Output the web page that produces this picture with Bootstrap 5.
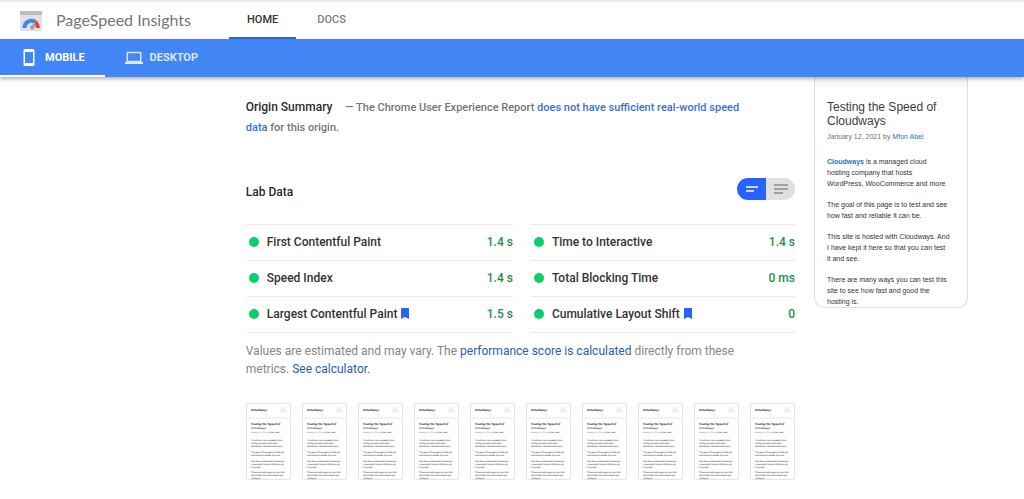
<!DOCTYPE html>
<html lang="en">
<head>
<meta charset="utf-8">
<meta name="viewport" content="width=device-width, initial-scale=1">
<title>PageSpeed Insights</title>
<link href="https://cdn.jsdelivr.net/npm/bootstrap@5.3.0/dist/css/bootstrap.min.css" rel="stylesheet">
<style>
  body { font-family: Roboto, "Liberation Sans", sans-serif; font-size: 12px; color: #333; }
  a { text-decoration: none; color: #3b6fe0; }
  .site-header { border-top: 2px solid #ebebeb; height: 39px; padding-left: 19px; }
  .brand-name { font-family: Lato, sans-serif; font-size: 16px; line-height: 20px; color: #757575; width: 173px; margin-left: 13px; padding-bottom: 2px; }
  .site-nav { gap: 3px; }
  .site-tab { font-size: 11px; font-weight: 500; color: #808080; padding: 2px 18px 0; border-bottom: 2px solid transparent; }
  .site-tab.active { color: #333; border-color: #3367d6; }
  .device-bar { background: #4285f4; height: 38px; box-shadow: 0 2px 4px rgba(0,0,0,.3); position: relative; z-index: 2; }
  .device-tab { border: 0; border-bottom: 2px solid transparent; background: none; color: #d9e6fd; font-size: 11px; font-weight: 700; padding: 2px 20px 0; gap: 7px; }
  .device-tab.active { color: #fff; border-color: #fff; }
  .report { padding-left: 24%; padding-right: 56px; gap: 19px; }
  .results { padding-top: 20px; min-width: 0; }
  .section-title { font-size: 12px; font-weight: 500; line-height: 20px; color: #2b2b2b; }
  .origin { font-size: 11px; font-weight: 500; line-height: 20px; color: #757575; margin-bottom: 38px; padding-right: 40px; }
  .origin .section-title { margin-right: 10px; display: inline; }
  .lab-title { padding-top: 6px; }
  .view-switch { border-radius: 11px; overflow: hidden; }
  .view-switch label { width: 29px; height: 22px; background: #e0e0e0; }
  .view-switch input:checked + label { background: #2962ff; }
  .metrics { display: grid; grid-template-columns: 267fr 264fr; column-gap: 18px; margin-top: 22px; }
  .metric-list { border-top: 1px solid #ebebeb; margin: 0; }
  .metric { height: 36px; border-bottom: 1px solid #ebebeb; font-size: 12px; font-weight: 500; padding: 0 0 2px 3px; }
  .metric dt { font-weight: 500; color: #333; }
  .metric dd { color: #1a8f4a; margin: 0 0 0 auto; }
  .pass-dot { width: 10px; height: 10px; border-radius: 50%; background: #0cce6b; margin-right: 8px; }
  .disclaimer { font-size: 12px; line-height: 18px; color: #858585; margin: 9px 40px 25px 0; }
  .disclaimer a { color: #2a5db0; }
  .frame { width: 45px; height: 78px; }
  .final-shot { flex: 0 0 154px; height: 231px; border: 1px solid #dedede; border-top: 0; border-radius: 0 0 10px 10px; overflow: hidden; font-family: "Liberation Sans", sans-serif; font-size: 7px; line-height: 11px; color: #333; }
  .shot-header { height: 10px; background: #f7f7f7; }
  .shot-body { padding: 13px 8px 0 12px; }
  .shot-body h2 { font-size: 12px; line-height: 14px; font-weight: 400; margin: 0 0 3px; color: #3a3a3a; }
  .shot-body p { margin: 0 0 10px; white-space: nowrap; }
  .shot-body .byline { font-size: 7px; color: #6f6f6f; margin-bottom: 14px; }
  .shot-body a { color: #1e73be; }
</style>
</head>
<body class="bg-white">
<svg class="d-none" aria-hidden="true">
  <symbol id="bookmark" viewBox="0 0 8 11"><path fill="#2962ff" d="M0 1Q0 0 1 0H7Q8 0 8 1V11L4 9L0 11Z"/></symbol>
  <symbol id="frame" viewBox="0 0 45 78">
    <path fill="#fff" stroke="#e4e4e4" d="M.5.5h44v76H.5z"/>
    <path fill="#f3f3f3" d="M1 14h43v2H1z"/>
    <path fill="#f5f5f5" d="M34 4h6v6h-6z"/><path stroke="#aaa" stroke-width=".6" d="M36 7h2"/>
    <g font-family="Liberation Sans, sans-serif" font-size="2.2" fill="#111" text-rendering="geometricPrecision">
      <text x="5" y="8" font-size="3" font-weight="700">Cloudways</text>
      <text x="5" y="22" font-size="3" font-weight="700">Testing the Speed of</text>
      <text x="5" y="26" font-size="3">Cloudways</text>
      <text x="5" y="30" font-size="2" fill="#777">January 12, 2021 by <tspan fill="#1e73be" font-weight="700">Mfon Abel</tspan></text>
      <text x="5" y="38"><tspan fill="#1e8fc5" font-weight="700">Cloudways</tspan> is a managed cloud</text>
      <text x="5" y="41">hosting company that hosts</text>
      <text x="5" y="44">WordPress, WooCommerce and</text>
      <text x="5" y="50">The goal of this page is to test and</text>
      <text x="5" y="53">how fast and reliable it can be.</text>
      <text x="5" y="59">This site is hosted with Cloudways.</text>
      <text x="5" y="62">I have kept it here so that you can</text>
      <text x="5" y="65">it and see.</text>
      <text x="5" y="70">There are many ways you can test</text>
      <text x="5" y="73">site to see how fast and good the</text>
      <text x="5" y="76">hosting is.</text>
    </g>
  </symbol>
</svg>

<header class="site-header d-flex align-items-stretch">
  <svg class="align-self-center" width="24" height="20" viewBox="0 0 24 20" aria-hidden="true">
    <rect x="1" width="22" height="20" rx="1" fill="#e1e1e1"/><path fill="#bdbdbd" d="M1 1q0-1 1-1h20q1 0 1 1v3H1z"/>
    <path fill="none" stroke="#4285f4" stroke-width="4" d="M5.500 17A7 7 0 0 1 16 10.700"/>
    <path fill="#db4437" d="M17 9q3.700 3 3.800 8H17q0-3-2-5z"/>
    <path fill="#9e9e9e" d="M17.500 10.500L15 17.500q-1.500 2-3.200.8-1.500-1.500 0-3z"/>
  </svg>
  <span class="brand-name align-self-center">PageSpeed Insights</span>
  <nav class="site-nav d-flex" aria-label="Site">
    <a class="site-tab active d-flex align-items-center" href="#">HOME</a>
    <a class="site-tab d-flex align-items-center" href="#">DOCS</a>
  </nav>
</header>

<div class="device-bar d-flex">
  <button type="button" class="device-tab active d-flex align-items-center">
    <svg width="18" height="18" viewBox="0 0 18 18" aria-hidden="true"><path fill="#fff" fill-rule="evenodd" d="M5 0h8q1.500 0 1.500 1.500v14q0 1.500-1.500 1.500H5q-1.500 0-1.500-1.500v-14Q3.500 0 5 0zM5 3v11h8V3z"/></svg>MOBILE</button>
  <button type="button" class="device-tab d-flex align-items-center">
    <svg width="18" height="14" viewBox="0 0 18 14" aria-hidden="true"><path fill="none" stroke="#d9e6fd" stroke-width="1.500" d="M2.300 1.500h13.400v9H2.300z"/><path fill="#d9e6fd" d="M0 11h18v2H0z"/></svg>DESKTOP</button>
</div>

<main class="report d-flex align-items-start">
  <div class="results flex-grow-1">
    <div class="origin"><h2 class="section-title">Origin Summary</h2> — The Chrome User Experience Report <a href="#">does not have sufficient real-world speed data</a> for this origin.</div>

    <div class="d-flex align-items-center justify-content-between">
      <h2 class="section-title lab-title m-0">Lab Data</h2>
      <div class="view-switch d-flex" role="group" aria-label="Metric detail">
        <input class="visually-hidden" type="radio" name="detail" id="compact" checked>
        <label for="compact" class="d-flex align-items-center justify-content-center" aria-label="Compact"><svg width="14" height="8"><path stroke="#fff" stroke-width="1.500" d="M1 2h12M1 6h8"/></svg></label>
        <input class="visually-hidden" type="radio" name="detail" id="expanded">
        <label for="expanded" class="d-flex align-items-center justify-content-center" aria-label="Expanded"><svg width="16" height="12"><path stroke="#8c8c8c" stroke-width="1.500" d="M1 2h14M1 6h14M1 10h9"/></svg></label>
      </div>
    </div>

    <div class="metrics">
      <dl class="metric-list">
        <div class="metric d-flex align-items-center"><span class="pass-dot"></span><dt>First Contentful Paint</dt><dd>1.4 s</dd></div>
        <div class="metric d-flex align-items-center"><span class="pass-dot"></span><dt>Speed Index</dt><dd>1.4 s</dd></div>
        <div class="metric d-flex align-items-center"><span class="pass-dot"></span><dt>Largest Contentful Paint</dt><svg class="ms-1" width="8" height="11" aria-hidden="true"><use href="#bookmark"/></svg><dd>1.5 s</dd></div>
      </dl>
      <dl class="metric-list">
        <div class="metric d-flex align-items-center"><span class="pass-dot"></span><dt>Time to Interactive</dt><dd>1.4 s</dd></div>
        <div class="metric d-flex align-items-center"><span class="pass-dot"></span><dt>Total Blocking Time</dt><dd>0 ms</dd></div>
        <div class="metric d-flex align-items-center"><span class="pass-dot"></span><dt>Cumulative Layout Shift</dt><svg class="ms-1" width="8" height="11" aria-hidden="true"><use href="#bookmark"/></svg><dd>0</dd></div>
      </dl>
    </div>

    <p class="disclaimer">Values are estimated and may vary. The <a href="#">performance score is calculated</a> directly from these metrics. <a href="#">See calculator.</a></p>

    <div class="d-flex justify-content-between">
      <svg class="frame"><use href="#frame"/></svg>
      <svg class="frame"><use href="#frame"/></svg>
      <svg class="frame"><use href="#frame"/></svg>
      <svg class="frame"><use href="#frame"/></svg>
      <svg class="frame"><use href="#frame"/></svg>
      <svg class="frame"><use href="#frame"/></svg>
      <svg class="frame"><use href="#frame"/></svg>
      <svg class="frame"><use href="#frame"/></svg>
      <svg class="frame"><use href="#frame"/></svg>
      <svg class="frame"><use href="#frame"/></svg>
    </div>
  </div>

  <aside class="final-shot" aria-label="Final screenshot">
    <div class="shot-header"></div>
    <div class="shot-body">
      <h2>Testing the Speed of<br>Cloudways</h2>
      <p class="byline">January 12, 2021 by <a href="#">Mfon Abel</a></p>
      <p><a class="fw-bold" href="#">Cloudways</a> is a managed cloud<br>hosting company that hosts<br>WordPress, WooCommerce and more</p>
      <p>The goal of this page is to test and see<br>how fast and reliable it can be.</p>
      <p>This site is hosted with Cloudways. And<br>I have kept it here so that you can test<br>it and see.</p>
      <p>There are many ways you can test this<br>site to see how fast and good the<br>hosting is.</p>
    </div>
  </aside>
</main>
<script src="https://cdn.jsdelivr.net/npm/bootstrap@5.3.0/dist/js/bootstrap.bundle.min.js"></script>
</body>
</html>
